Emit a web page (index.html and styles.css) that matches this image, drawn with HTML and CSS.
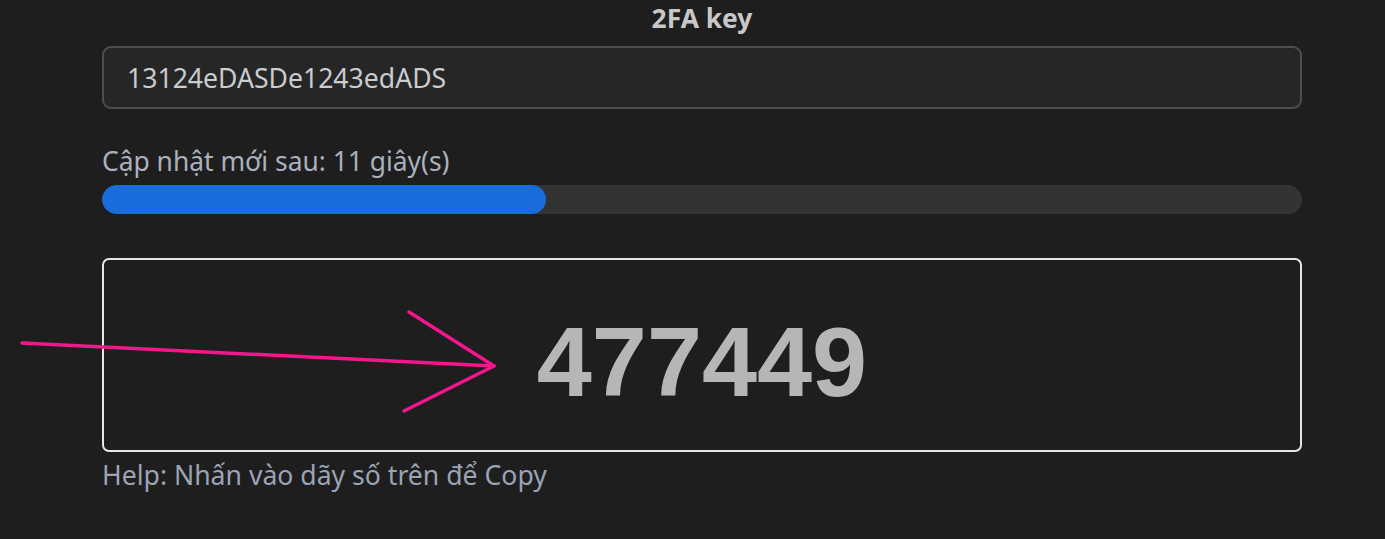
FILE: index.html
```html
<!DOCTYPE html>
<html lang="vi">
<head>
<meta charset="utf-8">
<link rel="stylesheet" href="styles.css">
</head>
<body>
<main class="wrap">
  <h2 class="title">2FA key</h2>
  <div class="input">13124eDASDe1243edADS</div>
  <div class="label">Cập nhật mới sau: 11 giây(s)</div>
  <div class="bar"><div class="fill" style="width:37%"></div></div>
  <div class="code">477449</div>
  <div class="help">Help: Nhấn vào dãy số trên để Copy</div>
</main>
<svg class="arrow" width="520" height="120" viewBox="0 0 520 120">
  <g fill="none" stroke="#f5168c" stroke-width="3.5" stroke-linecap="round" stroke-linejoin="round">
    <path d="M22 43 L494 66"/>
    <path d="M409 12 L494 66 L404 111"/>
  </g>
</svg>
</body>
</html>
```
FILE: styles.css
```css
html, body { margin: 0; padding: 0; }
body {
  background: #1e1e1e;
  font-family: "Noto Sans", sans-serif;
  color: #cfcfcf;
  position: relative;
  height: 539px;
  overflow: hidden;
}
.wrap {
  width: 1200px;
  margin-left: 102px;
  display: flex;
  flex-direction: column;
}
.title {
  margin: 0;
  height: 46px;
  line-height: 36px;
  text-align: center;
  font-size: 26.4px;
  font-weight: 700;
  color: #c8c8c8;
}
.input {
  box-sizing: border-box;
  height: 63px;
  border: 2px solid #4e4e4e;
  border-radius: 9px;
  background: #262626;
  padding: 0 23px;
  display: flex;
  align-items: center;
  font-size: 26.6px;
  color: #c9ccd0;
}
.label {
  margin-top: 36px;
  font-size: 26.4px;
  line-height: 32px;
  color: #a9b1bd;
}
.bar {
  margin-top: 8px;
  height: 29px;
  border-radius: 15px;
  background: #333333;
  overflow: hidden;
}
.fill {
  height: 100%;
  background: #1a6bdc;
  border-radius: 15px;
}
.code {
  box-sizing: border-box;
  margin-top: 44px;
  height: 194px;
  border: 2px solid #e6e6e6;
  border-radius: 7px;
  display: flex;
  align-items: center;
  justify-content: center;
  padding-top: 14px;
  font-family: "Liberation Sans", Arial, sans-serif;
  font-weight: 700;
  font-size: 99px;
  color: #b6b6b6;
  cursor: pointer;
}
.help {
  margin-top: 7px;
  font-size: 26.6px;
  line-height: 32px;
  color: #9aa4b5;
}
.arrow {
  position: absolute;
  left: 0;
  top: 300px;
}
```
